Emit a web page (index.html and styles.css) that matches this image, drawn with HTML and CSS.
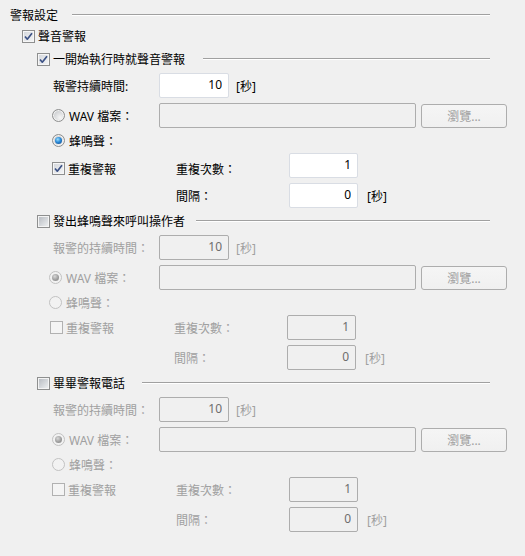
FILE: index.html
```html
<!DOCTYPE html>
<html lang="zh-Hant">
<head>
    <meta charset="UTF-8">
    <meta name="viewport" content="width=device-width, initial-scale=1.0">
    <title>警報設定</title>
    <link rel="stylesheet" href="styles.css">
</head>
<body>
    <div class="page">
        <div class="title-row">
            <span class="title">警報設定</span>
            <span class="rule r-title"></span>
        </div>

        <div class="top-row">
            <label class="check on">
                <span class="box"><svg viewBox="0 0 11 11"><path d="M2 5.5 L4.3 8.2 L9 2.3"/></svg></span>聲音警報
            </label>
        </div>

        <!-- 一開始執行時就聲音警報 -->
        <section class="group first">
            <div class="group-head">
                <label class="check on">
                    <span class="box"><svg viewBox="0 0 11 11"><path d="M2 5.5 L4.3 8.2 L9 2.3"/></svg></span>一開始執行時就聲音警報
                </label>
                <span class="rule r1"></span>
            </div>
            <div class="group-body">
                <div class="row">
                    <span class="lbl">報警持續時間:</span>
                    <input class="num" type="text" value="10">
                    <span class="unit">[秒]</span>
                </div>
                <div class="row">
                    <label class="opt"><span class="radio"></span>WAV 檔案：</label>
                    <input class="path" type="text" disabled>
                    <button class="browse" type="button" disabled>瀏覽...</button>
                </div>
                <div class="row">
                    <label class="opt"><span class="radio on"></span>蜂鳴聲：</label>
                </div>
                <div class="row">
                    <label class="check on rep low">
                        <span class="box"><svg viewBox="0 0 11 11"><path d="M2 5.5 L4.3 8.2 L9 2.3"/></svg></span>重複警報
                    </label>
                    <span class="sub low">重複次數：</span>
                    <input class="num" type="text" value="1">
                </div>
                <div class="row">
                    <span class="sub indent">間隔：</span>
                    <input class="num" type="text" value="0">
                    <span class="unit wide">[秒]</span>
                </div>
            </div>
        </section>

        <!-- 發出蜂鳴聲來呼叫操作者 -->
        <section class="group off alt">
            <div class="group-head">
                <label class="check"><span class="box"></span>發出蜂鳴聲來呼叫操作者</label>
                <span class="rule r2"></span>
            </div>
            <div class="group-body">
                <div class="row">
                    <span class="lbl">報警的持續時間：</span>
                    <input class="num" type="text" value="10" disabled>
                    <span class="unit">[秒]</span>
                </div>
                <div class="row">
                    <label class="opt"><span class="radio on"></span>WAV 檔案：</label>
                    <input class="path" type="text" disabled>
                    <button class="browse" type="button" disabled>瀏覽...</button>
                </div>
                <div class="row">
                    <label class="opt"><span class="radio"></span>蜂鳴聲：</label>
                </div>
                <div class="row shift">
                    <label class="check rep"><span class="box"></span>重複警報</label>
                    <span class="sub">重複次數：</span>
                    <input class="num" type="text" value="1" disabled>
                </div>
                <div class="row shift">
                    <span class="sub indent">間隔：</span>
                    <input class="num" type="text" value="0" disabled>
                    <span class="unit wide">[秒]</span>
                </div>
            </div>
        </section>

        <!-- 畢畢警報電話 -->
        <section class="group off">
            <div class="group-head">
                <label class="check"><span class="box"></span>畢畢警報電話</label>
                <span class="rule r3"></span>
            </div>
            <div class="group-body">
                <div class="row">
                    <span class="lbl">報警的持續時間：</span>
                    <input class="num" type="text" value="10" disabled>
                    <span class="unit">[秒]</span>
                </div>
                <div class="row">
                    <label class="opt"><span class="radio on"></span>WAV 檔案：</label>
                    <input class="path" type="text" disabled>
                    <button class="browse" type="button" disabled>瀏覽...</button>
                </div>
                <div class="row">
                    <label class="opt"><span class="radio"></span>蜂鳴聲：</label>
                </div>
                <div class="row">
                    <label class="check rep"><span class="box"></span>重複警報</label>
                    <span class="sub">重複次數：</span>
                    <input class="num" type="text" value="1" disabled>
                </div>
                <div class="row">
                    <span class="sub indent">間隔：</span>
                    <input class="num" type="text" value="0" disabled>
                    <span class="unit wide">[秒]</span>
                </div>
            </div>
        </section>
    </div>
</body>
</html>
```

FILE: styles.css
```css
body {
    margin: 0;
    background: #f0f0f0;
    color: #000;
    font-family: "Noto Sans", "Noto Sans CJK TC", sans-serif;
    font-size: 12px;
}

.page {
    padding-top: 7px;
}

/* header lines */
.title-row,
.group-head {
    display: flex;
    align-items: center;
    height: 16px;
}

.title-row {
    padding-left: 10px;
}

.rule {
    flex: 1;
    height: 0;
    margin-right: 35px;
    border-top: 1px solid #a0a0a0;
    border-bottom: 1px solid #fff;
}

.r-title { margin-left: 14px; }
.r1 { margin-left: 18px; }
.r2 { margin-left: 11px; }
.r3 { margin-left: 17px; }

.top-row {
    display: flex;
    align-items: center;
    height: 16px;
    margin-top: 5px;
    padding-left: 22px;
}

.group {
    margin-top: 5px;
}

.group.first {
    margin-top: 7px;
}

.group-head {
    padding-left: 37px;
}

.group-body {
    padding-top: 6px;
    padding-left: 52px;
}

.row {
    display: flex;
    align-items: center;
    height: 25px;
}

.row:nth-child(2),
.row:nth-child(5) {
    margin-top: 5px;
}

/* checkbox */
.check {
    display: flex;
    align-items: center;
    white-space: nowrap;
}

.box {
    box-sizing: border-box;
    width: 13px;
    height: 13px;
    margin-right: 3px;
    padding: 1px;
    border: 1px solid #8e8f8f;
    background: #f4f4f4;
    display: flex;
}

.box::before {
    content: '';
    flex: 1;
    background: linear-gradient(135deg, #b9bdc3, #eceef0);
}

.check.on .box::before {
    display: none;
}

.check.on .box {
    padding: 0;
    background: linear-gradient(135deg, #d3d6db, #f5f6f7);
    box-shadow: inset 0 0 0 1px #f6f6f6;
}

.box svg {
    width: 11px;
    height: 11px;
}

.box path {
    fill: none;
    stroke: #3c5285;
    stroke-width: 1.7;
    stroke-linejoin: round;
}

/* radio */
.opt {
    display: flex;
    align-items: center;
    width: 107px;
    white-space: nowrap;
}

.radio {
    position: relative;
    width: 11px;
    height: 11px;
    margin-right: 4px;
    border: 1px solid #8e8f8f;
    border-radius: 50%;
    background: radial-gradient(circle at 65% 70%, #f6f6f6, #c8cacd 80%);
    box-shadow: inset 0 0 0 1px #f2f2f2;
}

.radio.on::after {
    content: '';
    position: absolute;
    left: 2px;
    top: 2px;
    width: 7px;
    height: 7px;
    border-radius: 50%;
    background: radial-gradient(circle at 40% 35%, #9be0ff, #2a8ad8 45%, #0e3f7e);
}

/* labels and fields */
.lbl {
    width: 106px;
    margin-left: 1px;
    white-space: nowrap;
}

.rep {
    width: 124px;
}

.sub {
    width: 113px;
    white-space: nowrap;
}

.indent {
    margin-left: 124px;
}

.low {
    margin-top: 6px;
}

.unit {
    margin-left: 7px;
}

.unit.wide {
    margin-left: 9px;
}

input {
    box-sizing: border-box;
    height: 25px;
    margin: 0;
    font: inherit;
    outline: none;
}

.num {
    width: 70px;
    padding: 0 6px 2px 0;
    text-align: right;
    background: #fff;
    border: 1px solid #d9dde4;
    border-radius: 2px;
    color: #000;
}

.rep ~ .num,
.indent ~ .num {
    width: 69px;
}

.path {
    width: 257px;
    background: #f0f0f0;
    border: 1px solid #adadad;
    border-radius: 2px;
}

.browse {
    align-self: flex-end;
    box-sizing: border-box;
    width: 86px;
    height: 24px;
    margin-left: 5px;
    padding: 0;
    font: inherit;
    color: #a0a0a0;
    background: linear-gradient(#f5f5f5, #f0f0f0);
    border: 1px solid #adadad;
    border-radius: 3px;
}

/* disabled groups */
.off .group-body {
    color: #a0a0a0;
}

.off .num {
    background: #f0f0f0;
    border-color: #adadad;
    color: #6d6d6d;
}

.off .group-body .box {
    border-color: #b1b1b1;
    background: #f4f4f4;
}

.off .group-body .box::before {
    display: none;
}

.off .radio {
    border-color: #c2c2c2;
    background: #f2f2f2;
}

.off .radio.on::after {
    background: radial-gradient(circle at 40% 35%, #d8d8d8, #9a9a9a 60%, #8a8a8a);
}

.alt .opt {
    margin-left: -3px;
    width: 110px;
}

.alt .shift {
    margin-left: -2px;
}
```
